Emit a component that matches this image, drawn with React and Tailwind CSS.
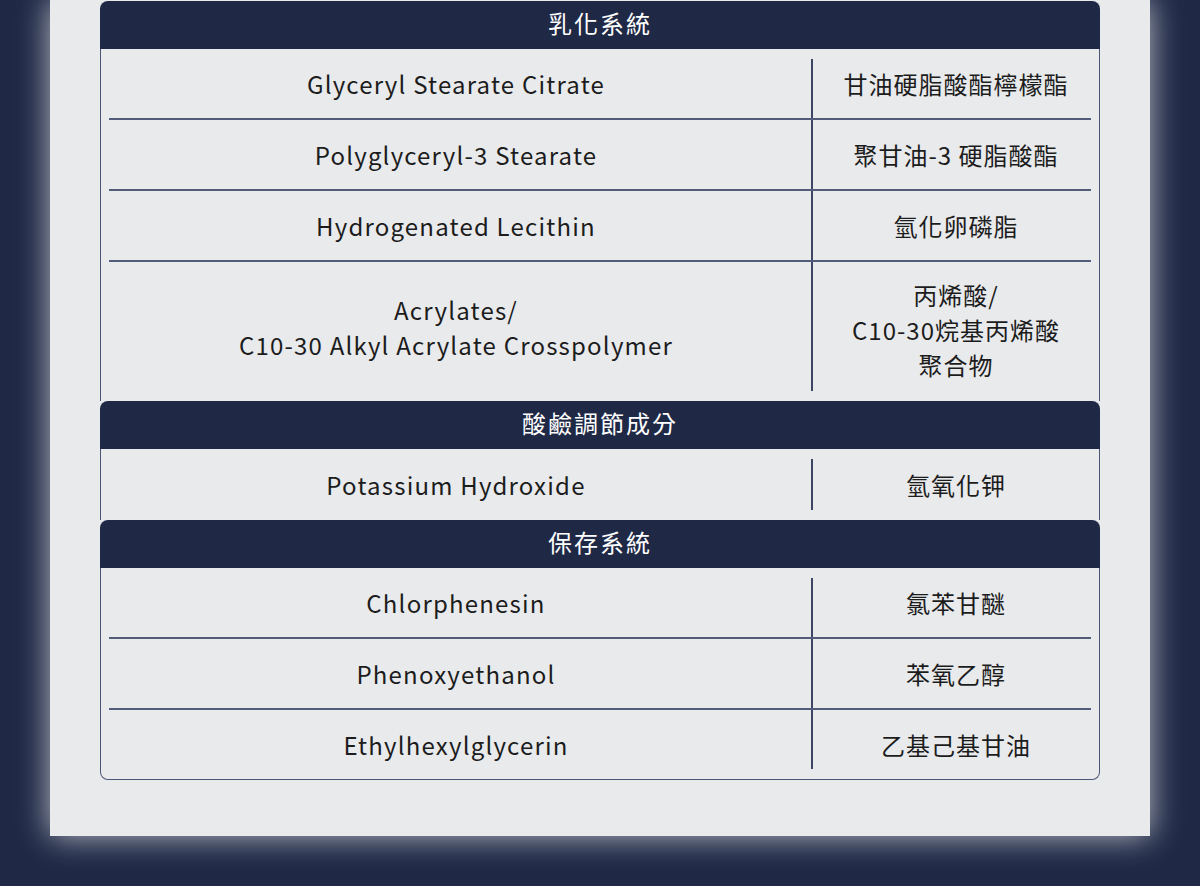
const sections = [
  {
    title: "乳化系統",
    rows: [
      [["Glyceryl Stearate Citrate"], ["甘油硬脂酸酯檸檬酯"]],
      [["Polyglyceryl-3 Stearate"], ["聚甘油-3 硬脂酸酯"]],
      [["Hydrogenated Lecithin"], ["氫化卵磷脂"]],
      [
        ["Acrylates/", "C10-30 Alkyl Acrylate Crosspolymer"],
        ["丙烯酸/", "C10-30烷基丙烯酸", "聚合物"],
      ],
    ],
  },
  {
    title: "酸鹼調節成分",
    rows: [[["Potassium Hydroxide"], ["氫氧化钾"]]],
  },
  {
    title: "保存系統",
    rows: [
      [["Chlorphenesin"], ["氯苯甘醚"]],
      [["Phenoxyethanol"], ["苯氧乙醇"]],
      [["Ethylhexylglycerin"], ["乙基己基甘油"]],
    ],
  },
];

const font = {
  fontFamily: '"Noto Sans CJK TC", "Noto Sans", sans-serif',
};

function Row({ left, right, first, last, single }) {
  const multi = left.length > 1;
  const leftPad = multi ? "pt-[12px] pb-[22px] " : single ? "py-[18px] " : "py-[17px] ";
  const rightPad = multi ? "pt-[15px] pb-[19px] " : single ? "py-[18px] " : "py-[17px] ";
  return (
    <div className="flex">
      <div
        className={
          "w-[710px] flex flex-col items-center justify-center text-[24px] leading-[35px] tracking-[1.2px] text-[#1c1c1c] " +
          leftPad
        }
      >
        {left.map((l, i) => (
          <div key={i}>{l}</div>
        ))}
      </div>
      <div
        className={
          "w-[2px] bg-[#3d4763] " +
          (first ? "mt-[10px] " : "") +
          (last ? "mb-[10px]" : "")
        }
      />
      <div
        className={
          "flex-1 flex flex-col items-center justify-center text-[24px] leading-[35px] tracking-[1px] text-[#1c1c1c] " +
          rightPad
        }
      >
        {right.map((l, i) => (
          <div key={i}>{l}</div>
        ))}
      </div>
    </div>
  );
}

export default function App() {
  return (
    <div
      className="w-[1200px] h-[886px] bg-[#1f2946] overflow-hidden px-[50px]"
      style={font}
    >
      <div className="h-[836px] bg-[#e9eaec] shadow-[0_0_30px_rgba(255,255,255,0.7)] px-[50px] pt-[1px]">
        <div className="flex flex-col">
          {sections.map((s, si) => (
            <div key={si} className="flex flex-col">
              <div className="h-[48px] rounded-t-[8px] bg-[#1f2946] flex items-center justify-center pb-[4px] text-white text-[24px] tracking-[2px]">
                {s.title}
              </div>
              <div
                className={
                  "border-x border-[#4c5674] " +
                  (si === sections.length - 1
                    ? "border-b rounded-b-[8px]"
                    : "")
                }
              >
                {s.rows.map((r, ri) => (
                  <div key={ri}>
                    {ri > 0 && (
                      <div className="mx-[8px] h-[2px] bg-[#525c79]" />
                    )}
                    <Row
                      left={r[0]}
                      right={r[1]}
                      first={ri === 0}
                      last={ri === s.rows.length - 1}
                      single={s.rows.length === 1}
                    />
                  </div>
                ))}
              </div>
            </div>
          ))}
        </div>
      </div>
    </div>
  );
}
